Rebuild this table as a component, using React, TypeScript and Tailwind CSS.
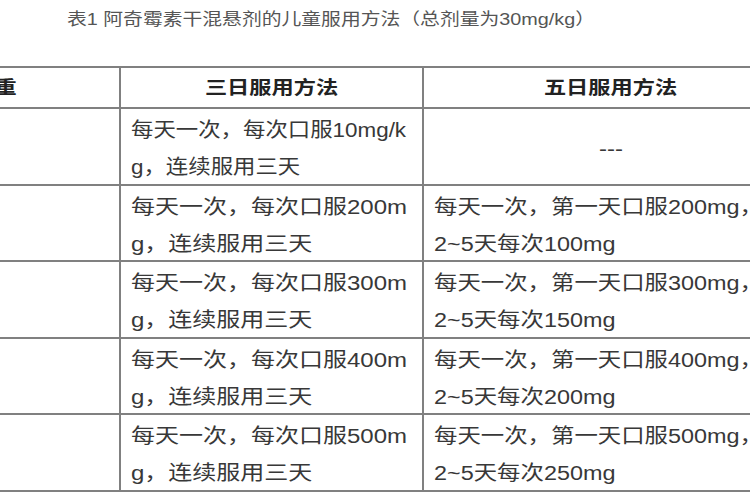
import React from 'react';

// 表1 — 三日 / 五日服用方法（截图里表格被裁切，左列只露出"重"字）
const rows = [
  {
    three: ['每天一次，每次口服10mg/k', 'g，连续服用三天'],
    five: null,
    tight: true,
  },
  {
    three: ['每天一次，每次口服200m', 'g，连续服用三天'],
    five: ['每天一次，第一天口服200mg，', '2~5天每次100mg'],
  },
  {
    three: ['每天一次，每次口服300m', 'g，连续服用三天'],
    five: ['每天一次，第一天口服300mg，', '2~5天每次150mg'],
  },
  {
    three: ['每天一次，每次口服400m', 'g，连续服用三天'],
    five: ['每天一次，第一天口服400mg，', '2~5天每次200mg'],
  },
  {
    three: ['每天一次，每次口服500m', 'g，连续服用三天'],
    five: ['每天一次，第一天口服500mg，', '2~5天每次250mg'],
  },
];

function Lines({ lines, scale }: { lines: string[]; scale: string }) {
  return (
    <div className="pt-[3px] pl-[10px]">
      {lines.map((l) => (
        <div
          key={l}
          className={'origin-left whitespace-nowrap text-[20px] leading-[37px] text-[#383838] ' + scale}
        >
          {l}
        </div>
      ))}
    </div>
  );
}

export default function App() {
  return (
    <div className="w-[750px] h-[500px] overflow-hidden bg-white font-['Liberation_Sans','Noto_Sans_CJK_SC',sans-serif]">
      {/* 标题 */}
      <div className="h-[66px] pt-[7px] pl-[67px]">
        <div className="origin-left scale-x-120 whitespace-nowrap text-[16.5px] leading-6 text-[#555]">
          表1 阿奇霉素干混悬剂的儿童服用方法（总剂量为30mg/kg）
        </div>
      </div>

      {/* 表格 */}
      <div className="-ml-[129px] w-[931px] border-t-2 border-[#808080]">
        {/* 表头 */}
        <div className="flex h-[41px] border-b-2 border-[#808080] font-bold text-[18.5px] text-[#222]">
          <div className="w-[250px] flex items-center justify-center border-r-2 border-[#808080]">
            <span className="inline-block scale-x-120 whitespace-nowrap">体重</span>
          </div>
          <div className="w-[303px] flex items-center justify-center border-r-2 border-[#808080]">
            <span className="inline-block scale-x-120 whitespace-nowrap">三日服用方法</span>
          </div>
          <div className="w-[374px] flex items-center justify-center">
            <span className="inline-block scale-x-120 whitespace-nowrap">五日服用方法</span>
          </div>
        </div>

        {rows.map((r, i) => (
          <div key={i} className="flex h-[76.5px] border-b-2 border-[#808080]">
            <div className="w-[250px] border-r-2 border-[#808080]" />
            <div className="w-[303px] border-r-2 border-[#808080]">
              <Lines lines={r.three} scale={r.tight ? 'scale-x-112' : 'scale-x-120'} />
            </div>
            <div className="w-[374px]">
              {r.five ? (
                <Lines lines={r.five} scale="scale-x-117" />
              ) : (
                <div className="h-full flex items-center justify-center pt-[6px]">
                  <span className="inline-block scale-x-120 text-[20px] text-[#383838]">---</span>
                </div>
              )}
            </div>
          </div>
        ))}
      </div>
    </div>
  );
}
